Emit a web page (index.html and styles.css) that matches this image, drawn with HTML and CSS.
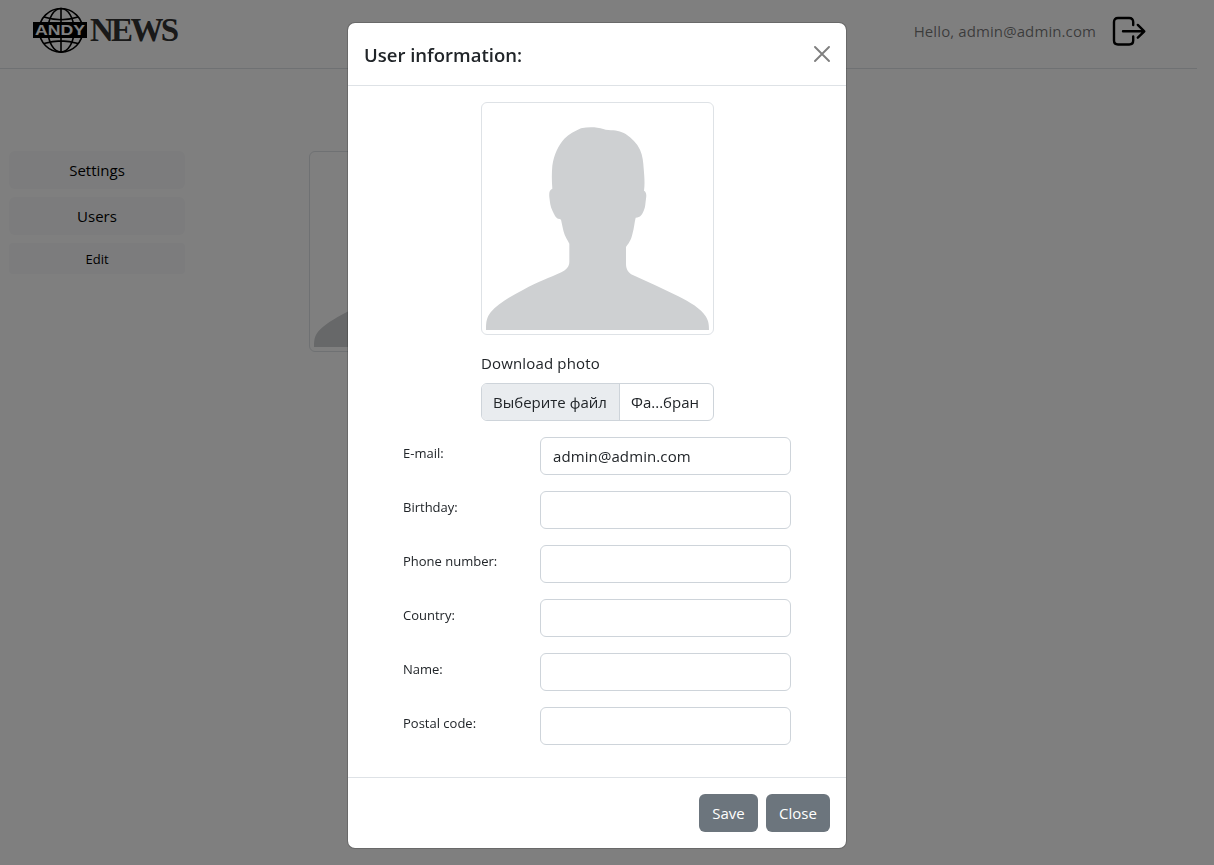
FILE: index.html
```html
<!DOCTYPE html>
<html lang="en">
<head>
<meta charset="utf-8">
<title>Andy News</title>
<link rel="stylesheet" href="styles.css">
</head>
<body>
<svg class="defs" width="0" height="0" aria-hidden="true">
  <symbol id="person" viewBox="48 36 669 669">
    <path d="M48 705C48 680 50 668 62 652C82 627 120 605 160 584C205 560 238 549 274 532C290 523 298 515 298 500V446C290 430 283 422 279 402C276 388 275 382 273 374Q270 371 264 371C257 369 252 357 248 349C240 333 240 320 238 306C237 294 238 284 247 281C245 256 245 232 247 212C252 178 266 149 283 131C297 117 314 109 333 100C350 96 368 96 382 98C396 100 404 104 415 105C436 106 452 108 467 117C485 129 501 145 510 164C518 182 520 202 521 220C523 244 525 265 522 287C529 291 530 299 528 311C526 325 526 337 522 345C516 359 512 368 497 368C493 384 492 400 488 414C484 432 480 440 468 456V506C468 524 476 534 490 541C535 561 580 582 625 604C660 622 693 641 707 664C716 678 717 690 717 705Z"/>
  </symbol>
</svg>
<div class="page">
  <header class="navbar">
    <svg class="logo" width="154" height="48" viewBox="0 0 154 48">
      <g fill="none" stroke="#000" stroke-width="1.600">
        <circle cx="29" cy="24.3" r="21.8"/>
        <ellipse cx="29" cy="24.3" rx="13" ry="21.8"/>
        <path d="M29 2.5V46M12 11Q29 16.500 46 11M12 37.600Q29 32.100 46 37.600"/>
      </g>
      <path d="M1 16H55V32H1Z"/>
      <text class="logo-andy" x="3" y="29" textLength="50" lengthAdjust="spacingAndGlyphs">ANDY</text>
      <text class="logo-news" x="58" y="35" textLength="89" lengthAdjust="spacing">NEWS</text>
    </svg>
    <div class="account">
      <span class="hello">Hello, admin@admin.com</span>
      <svg width="34" height="30" viewBox="0 0 34 30" fill="none" stroke="#000" stroke-width="2.4" stroke-linecap="round" stroke-linejoin="round">
        <path d="M21.200 9V6Q21.200 2 17.200 2H6Q2 2 2 6V24.500Q2 28.500 6 28.500H17.200Q21.200 28.500 21.200 24.500V20.500M11 15.300H32M25.800 8.900L32.300 15.300L25.800 21.700"/>
      </svg>
    </div>
  </header>
  <main class="content">
    <nav class="side">
      <button class="side-btn">Settings</button>
      <button class="side-btn">Users</button>
      <button class="side-btn small">Edit</button>
    </nav>
    <div class="thumb"><svg><use href="#person"/></svg></div>
  </main>
</div>
<div class="backdrop">
  <div class="modal">
    <div class="modal-header">
      <h5 class="title">User information:</h5>
      <svg class="x" width="16" height="16" viewBox="0 0 16 16"><path d="M1 1L15 15M15 1L1 15"/></svg>
    </div>
    <div class="modal-body">
      <div class="photo">
        <div class="thumb large"><svg><use href="#person"/></svg></div>
        <div class="photo-label">Download photo</div>
        <div class="file"><span class="pick">Выберите файл</span><span class="picked">Фа...бран</span></div>
      </div>
      <div class="row"><label>E-mail:</label><input value="admin@admin.com"></div>
      <div class="row"><label>Birthday:</label><input></div>
      <div class="row"><label>Phone number:</label><input></div>
      <div class="row"><label>Country:</label><input></div>
      <div class="row"><label>Name:</label><input></div>
      <div class="row"><label>Postal code:</label><input></div>
    </div>
    <div class="modal-footer">
      <button class="btn save">Save</button>
      <button class="btn close">Close</button>
    </div>
  </div>
</div>
</body>
</html>
```
FILE: styles.css
```css
* { box-sizing: border-box; }
body { margin: 0; height: 865px; overflow: hidden; background: #fff; color: #212529; font: 15px/24px "Open Sans", "Noto Sans", sans-serif; }
button, input { font: inherit; color: inherit; }
.defs { display: block; position: absolute; }
.page { padding-right: 17px; }
.navbar { height: 69px; border-bottom: 1px solid #dee2e6; display: flex; justify-content: space-between; padding: 6px 51px 0 32px; }
.account { display: flex; align-items: flex-start; padding-top: 10px; gap: 16px; }
.hello { color: rgba(0,0,0,.55); line-height: 30px; letter-spacing: .1px; }
.logo { overflow: visible; }
.logo-andy { font: bold 15px "Liberation Sans", sans-serif; fill: #fff; }
.logo-news { font: bold 33px "Liberation Serif", serif; fill: #333; }
.content { display: flex; padding: 82px 0 0 9px; gap: 124px; align-items: flex-start; }
.side { width: 176px; display: flex; flex-direction: column; gap: 8px; }
.side-btn { height: 38px; border: 0; border-radius: 6px; background: #f8f9fa; color: #000; padding: 0; }
.side-btn.small { height: 31px; font-size: 13px; border-radius: 4px; }
.thumb { width: 201px; height: 201px; border: 1px solid #dee2e6; border-radius: 6px; padding: 4px; background: #fff; fill: #ced0d2; }
.thumb svg { display: block; width: 100%; height: 100%; }
.thumb.large { width: 233px; height: 233px; }
.backdrop { position: fixed; inset: 0; background: rgba(0,0,0,.5); padding: 22px 0 0 347px; }
.modal { width: 500px; height: 827px; background: #fff; background-clip: padding-box; border: 1px solid rgba(0,0,0,.175); border-radius: 8px; display: flex; flex-direction: column; }
.modal-header { height: 63px; border-bottom: 1px solid #dee2e6; display: flex; align-items: center; justify-content: space-between; padding: 0 16px; }
.title { margin: 2px 0 0; font-size: 18.5px; line-height: 30px; font-weight: 600; }
.x { fill: none; stroke: #7f7f7f; stroke-width: 1.9; stroke-linecap: round; }
.modal-body { flex: 1; padding: 16px 55px; display: flex; flex-direction: column; gap: 16px; }
.photo { width: 233px; margin-left: 78px; }
.photo-label { margin: 16px 0 8px; letter-spacing: .15px; }
.file { height: 38px; display: flex; border: 1px solid #ced4da; border-radius: 6px; overflow: hidden; line-height: 36px; }
.pick { width: 138px; padding-left: 11px; background: #e9ecef; border-right: 1px solid #ced4da; white-space: nowrap; }
.picked { padding-left: 11px; white-space: nowrap; }
.row { display: flex; justify-content: space-between; }
.row label { font-size: 13px; line-height: 32px; white-space: nowrap; }
.row input { width: 251px; height: 38px; border: 1px solid #ced4da; border-radius: 6px; padding: 0 12px; margin: 0; background: #fff; letter-spacing: .1px; }
.modal-footer { height: 71px; border-top: 1px solid #dee2e6; display: flex; justify-content: flex-end; align-items: center; gap: 8px; padding: 0 16px; }
.btn { height: 38px; border: 0; border-radius: 6px; background: #6c757d; color: #fff; padding: 0 0 1px; }
.save { width: 59px; }
.close { width: 64px; }
```
